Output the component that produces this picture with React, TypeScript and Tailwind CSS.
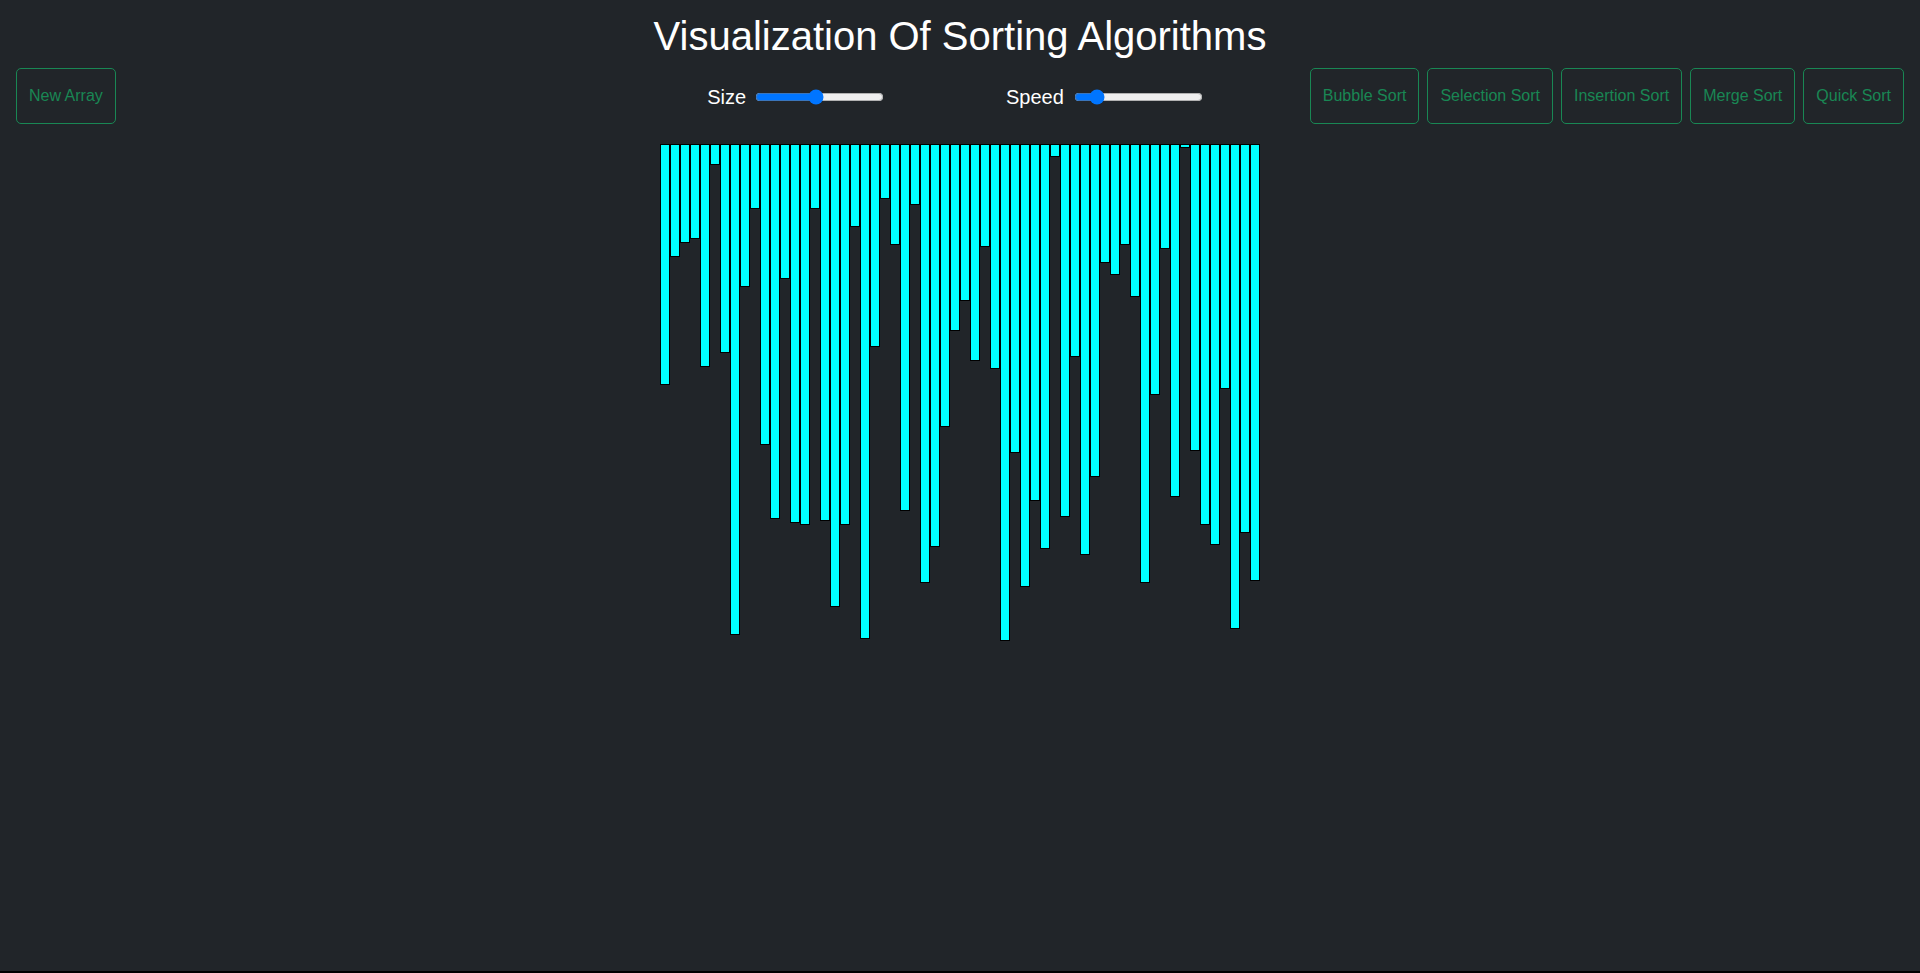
import { useState } from "react";

const heights = [
  241, 113, 99, 95, 223, 21, 209, 491, 143, 65, 301, 375, 135, 379, 381, 65,
  377, 463, 381, 83, 495, 203, 55, 101, 367, 61, 439, 403, 283, 187, 157, 217,
  103, 225, 497, 309, 443, 357, 405, 13, 373, 213, 411, 333, 119, 131, 101, 153,
  439, 251, 105, 353, 4, 307, 381, 401, 245, 485, 389, 437,
];

const sorts = [
  "Bubble Sort",
  "Selection Sort",
  "Insertion Sort",
  "Merge Sort",
  "Quick Sort",
];

function SortButton({ label }: { label: string }) {
  return (
    <button className="h-[56px] px-3 border border-[#198754] rounded-[5px] text-[#198754] text-base leading-6 whitespace-nowrap hover:bg-[#198754] hover:text-white">
      {label}
    </button>
  );
}

export default function App() {
  const [size, setSize] = useState(47);
  const [speed, setSpeed] = useState(13);

  return (
    <div className="h-screen bg-black font-['Liberation_Sans',Arial,sans-serif]">
      <div className="h-[calc(100vh-2px)] bg-[#212529] text-white">
        <div className="pt-3 mb-2">
          <h1 className="text-[40px] leading-[48px] text-center font-normal">
            Visualization Of Sorting Algorithms
          </h1>
        </div>

        <div className="flex items-center px-4 h-[56px]">
          <div className="flex-1 flex">
            <SortButton label="New Array" />
          </div>

          <div className="flex items-center mr-[10px] pt-[2px]">
            <span className="text-xl mr-[9px]">Size</span>
            <input
              type="range"
              min={0}
              max={100}
              value={size}
              onChange={(e) => setSize(Number(e.target.value))}
              className="w-[129px]"
            />
            <span className="text-xl ml-[122px] mr-[10px]">Speed</span>
            <input
              type="range"
              min={0}
              max={100}
              value={speed}
              onChange={(e) => setSpeed(Number(e.target.value))}
              className="w-[129px]"
            />
          </div>

          <div className="flex-1 flex justify-end gap-2">
            {sorts.map((s) => (
              <SortButton key={s} label={s} />
            ))}
          </div>
        </div>

        <div className="flex justify-center items-start mt-[20px]">
          {heights.map((h, i) => (
            <div
              key={i}
              className="w-[10px] bg-[#00ffff] border border-black"
              style={{ height: h }}
            />
          ))}
        </div>
      </div>
    </div>
  );
}
